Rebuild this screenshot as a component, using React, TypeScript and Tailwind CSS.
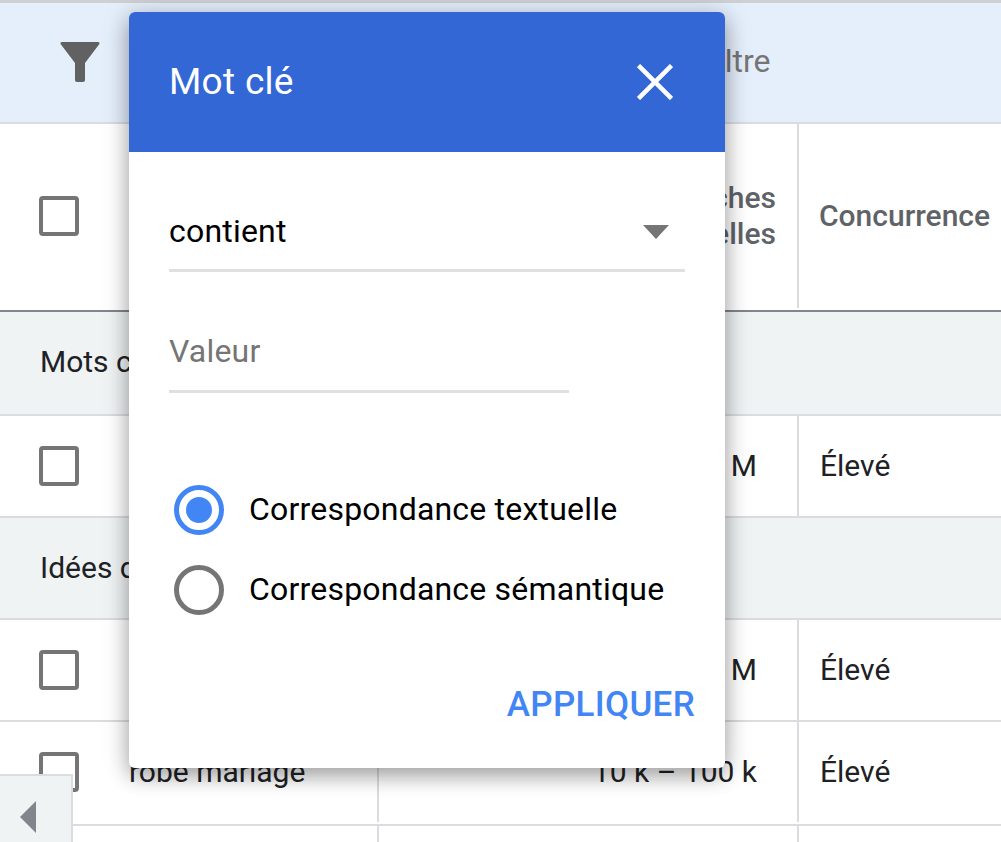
const Checkbox = () => (
  <div className="w-10 h-10 rounded-[4px] border-[4px] border-[#757575] bg-white" />
);

function Row({ keyword, volume, level, tall }: { keyword: string; volume: string; level: string; tall?: boolean }) {
  return (
    <div className={`flex border-b-2 border-[#dadce0] text-[#202124] ${tall ? 'h-[104px]' : 'h-[102px]'}`}>
      <div className={`w-[129px] shrink-0 flex items-center pl-[39px] ${tall ? 'mb-[2px]' : ''}`}>
        <Checkbox />
      </div>
      <div className={`w-[250px] shrink-0 flex items-center border-r-2 border-[#dadce0] ${tall ? 'mb-[2px]' : ''}`}>{keyword}</div>
      <div className={`w-[420px] shrink-0 flex items-center justify-end pr-[40px] border-r-2 border-[#dadce0] ${tall ? 'mb-[2px]' : ''}`}>{volume}</div>
      <div className={`flex-1 flex items-center pl-[21px] ${tall ? 'mb-[2px]' : ''}`}>{level}</div>
    </div>
  );
}

function Section({ label, height }: { label: string; height: string }) {
  return (
    <div className={`flex items-center pl-[40px] bg-[#eff3f4] border-b-2 border-[#dadce0] text-[#202124] ${height}`}>
      {label}
    </div>
  );
}

export default function App() {
  return (
    <div className="relative w-[1001px] h-[842px] overflow-hidden bg-white font-['Roboto',sans-serif] text-[30px] leading-[36px]">
      {/* table behind the dialog */}
      <div className="h-[3px] bg-[#cfd0d4]" />
      <div className="flex items-center h-[121px] bg-[#e5effc] border-b-2 border-[#dadce0] pl-[60px]">
        <svg viewBox="0 0 40 40" className="w-10 h-10 shrink-0 -mt-[2px] text-[#616161]" fill="currentColor">
          <path d="M.6 2C.2.8.8 0 2 0h36c1.200 0 1.800.8 1.400 2L25 21v17c0 1.200-.8 2-2 2h-6c-1.200 0-2-.8-2-2V21z" />
        </svg>
        <span className="ml-[453px] pb-[4px] text-[#757575] text-[32px]">Ajouter un filtre</span>
      </div>
      <div className="flex h-[188px] border-b-2 border-[#80868b] font-medium text-[#5f6368]">
        <div className="w-[129px] shrink-0 flex items-center pl-[39px] pb-[2px]">
          <Checkbox />
        </div>
        <div className="w-[250px] shrink-0 flex items-center pb-[2px]">Mot clé</div>
        <div className="w-[420px] shrink-0 flex items-center justify-end text-right pr-[21px] border-r-2 border-[#dadce0] mb-[2px]">
          Recherches
          <br />
          mensuelles
        </div>
        <div className="flex-1 flex items-center pl-[20px] pb-[2px]">Concurrence</div>
      </div>
      <Section label="Mots clés fournis" height="h-[104px] pb-[2px]" />
      <Row keyword="robe de mariée" volume="1 k – 10 M" level="Élevé" />
      <Section label="Idées de mots clés" height="h-[102px]" />
      <Row keyword="robe" volume="1 M – 10 M" level="Élevé" />
      <Row keyword="robe mariage" volume="10 k – 100 k" level="Élevé" tall />
      <Row keyword="" volume="" level="" />

      {/* side panel toggle */}
      <div className="absolute left-0 bottom-0 w-[73px] h-[68px] flex items-center pl-[20px] pt-[16px] bg-[#eff3f4] border-t-2 border-r-2 border-[#dadce0]">
        <svg viewBox="0 0 16 32" className="w-4 h-8 text-[#80868b]" fill="currentColor">
          <path d="M16 0v32L0 16z" />
        </svg>
      </div>

      {/* filter dialog */}
      <div className="absolute left-[129px] top-[12px] w-[596px] h-[756px] rounded-[6px] bg-white shadow-[0_8px_20px_rgba(0,0,0,0.3),0_2px_30px_rgba(0,0,0,0.15)] flex flex-col overflow-hidden">
        <div className="flex items-center justify-between h-[140px] shrink-0 bg-[#3367d6] pl-[40px] pr-[52px] text-white text-[37px] tracking-[0.3px]">
          <span>Mot clé</span>
          <svg viewBox="0 0 36 36" className="w-9 h-9" fill="none" stroke="currentColor" strokeWidth="4.500">
            <path d="M1.500 1.500l33 33M34.500 1.500l-33 33" />
          </svg>
        </div>
        <div className="flex flex-col flex-1 pl-[40px] pr-[30px] text-[32px] tracking-[0.2px]">
          <div className="flex items-center justify-between h-[70px] pb-[10px] mt-[50px] mr-[10px] border-b-[3px] border-[#e0e0e0] text-black pr-[16px]">
            <span>contient</span>
            <svg viewBox="0 0 26 14" className="w-[26px] h-[14px] mt-[2px] text-[#757575]" fill="currentColor">
              <path d="M0 0h26L13 14z" />
            </svg>
          </div>
          <div className="flex items-center w-[400px] h-[73px] pb-[8px] mt-[48px] border-b-[3px] border-[#e0e0e0] text-[#757575]">
            Valeur
          </div>
          <div className="flex items-center gap-[25px] mt-[92px] text-black">
            <div className="ml-[5px] w-[50px] h-[50px] rounded-full border-[5px] border-[#4285f4] flex items-center justify-center">
              <div className="w-[26px] h-[26px] rounded-full bg-[#4285f4]" />
            </div>
            <span className="pb-[2px]">Correspondance textuelle</span>
          </div>
          <div className="flex items-center gap-[25px] mt-[30px] text-black">
            <div className="ml-[5px] w-[50px] h-[50px] rounded-full border-[5px] border-[#757575]" />
            <span className="pb-[2px]">Correspondance sémantique</span>
          </div>
          <div className="mt-[72px] text-right font-medium text-[#4285f4] text-[35px] tracking-[0.3px]">APPLIQUER</div>
        </div>
      </div>
    </div>
  );
}
